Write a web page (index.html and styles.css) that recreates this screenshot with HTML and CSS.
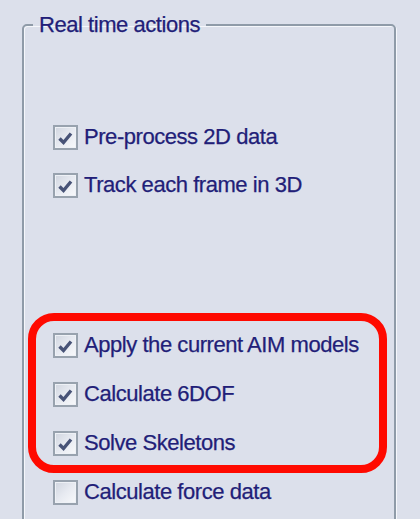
FILE: index.html
```html
<!DOCTYPE html>
<html>
<head>
<meta charset="utf-8">
<link rel="stylesheet" href="styles.css">
</head>
<body>
<fieldset class="group">
  <legend class="group-title">Real time actions</legend>
  <div class="rows rows-top">
    <div class="row"><span class="box checked"><svg viewBox="0 0 21 21"><path d="M4.5 11.5 L8.5 15.5 L16 6.5"/></svg></span><span class="label">Pre-process 2D data</span></div>
    <div class="row"><span class="box checked"><svg viewBox="0 0 21 21"><path d="M4.5 11.5 L8.5 15.5 L16 6.5"/></svg></span><span class="label">Track each frame in 3D</span></div>
  </div>
  <div class="highlight">
    <div class="row"><span class="box checked"><svg viewBox="0 0 21 21"><path d="M4.5 11.5 L8.5 15.5 L16 6.5"/></svg></span><span class="label">Apply the current AIM models</span></div>
    <div class="row"><span class="box checked"><svg viewBox="0 0 21 21"><path d="M4.5 11.5 L8.5 15.5 L16 6.5"/></svg></span><span class="label">Calculate 6DOF</span></div>
    <div class="row"><span class="box checked"><svg viewBox="0 0 21 21"><path d="M4.5 11.5 L8.5 15.5 L16 6.5"/></svg></span><span class="label">Solve Skeletons</span></div>
  </div>
  <div class="rows rows-bottom">
    <div class="row"><span class="box"></span><span class="label">Calculate force data</span></div>
  </div>
</fieldset>
</body>
</html>
```
FILE: styles.css
```css
html, body {
  margin: 0;
  padding: 0;
  height: 100%;
  overflow: hidden;
  background: #dce0eb;
}
body {
  font-family: "Liberation Sans", Arial, sans-serif;
  font-size: 22px;
  letter-spacing: -0.45px;
  color: #221e78;
  -webkit-text-stroke: 0.25px #221e78;
}
.group {
  box-sizing: border-box;
  margin: 12px 0 0 22px;
  padding: 0;
  width: 374px;
  height: 540px;
  border: 2px solid #8f9ba8;
  border-radius: 5px;
  box-shadow: 1px 1px 0 #f5f7fb, inset 1px 1px 0 #f5f7fb;
  min-width: 0;
}
.group-title {
  margin-left: 9px;
  padding: 0 6px 0 6px;
  line-height: 26px;
}
.rows {
  display: flex;
  flex-direction: column;
}
.rows-top {
  margin-top: 86px;
  gap: 22px;
}
.rows-top .row,
.rows-bottom .row {
  padding-left: 29px;
}
.row {
  display: flex;
  align-items: center;
  height: 26px;
}
.box {
  box-sizing: border-box;
  width: 25px;
  height: 25px;
  border: 2px solid #98a2ae;
  background: linear-gradient(135deg, #d0d5df 0%, #e7eaf1 50%, #f8f9fb 100%);
  box-shadow: inset 0 0 0 1px #eef1f6;
  flex: none;
  display: flex;
}
.box svg {
  width: 21px;
  height: 21px;
}
.box svg path {
  fill: none;
  stroke: #485377;
  stroke-width: 3.4;
  stroke-linecap: butt;
  stroke-linejoin: miter;
}
.label {
  margin-left: 6px;
  line-height: 26px;
  white-space: nowrap;
}
.highlight {
  box-sizing: border-box;
  margin: 115px 0 0 4px;
  width: 359px;
  height: 160px;
  border: 8px solid #ff0a00;
  border-radius: 26px;
  padding: 11px 0 0 17px;
  display: flex;
  flex-direction: column;
  gap: 23px;
}
.rows-bottom {
  margin-top: 6px;
}
```
